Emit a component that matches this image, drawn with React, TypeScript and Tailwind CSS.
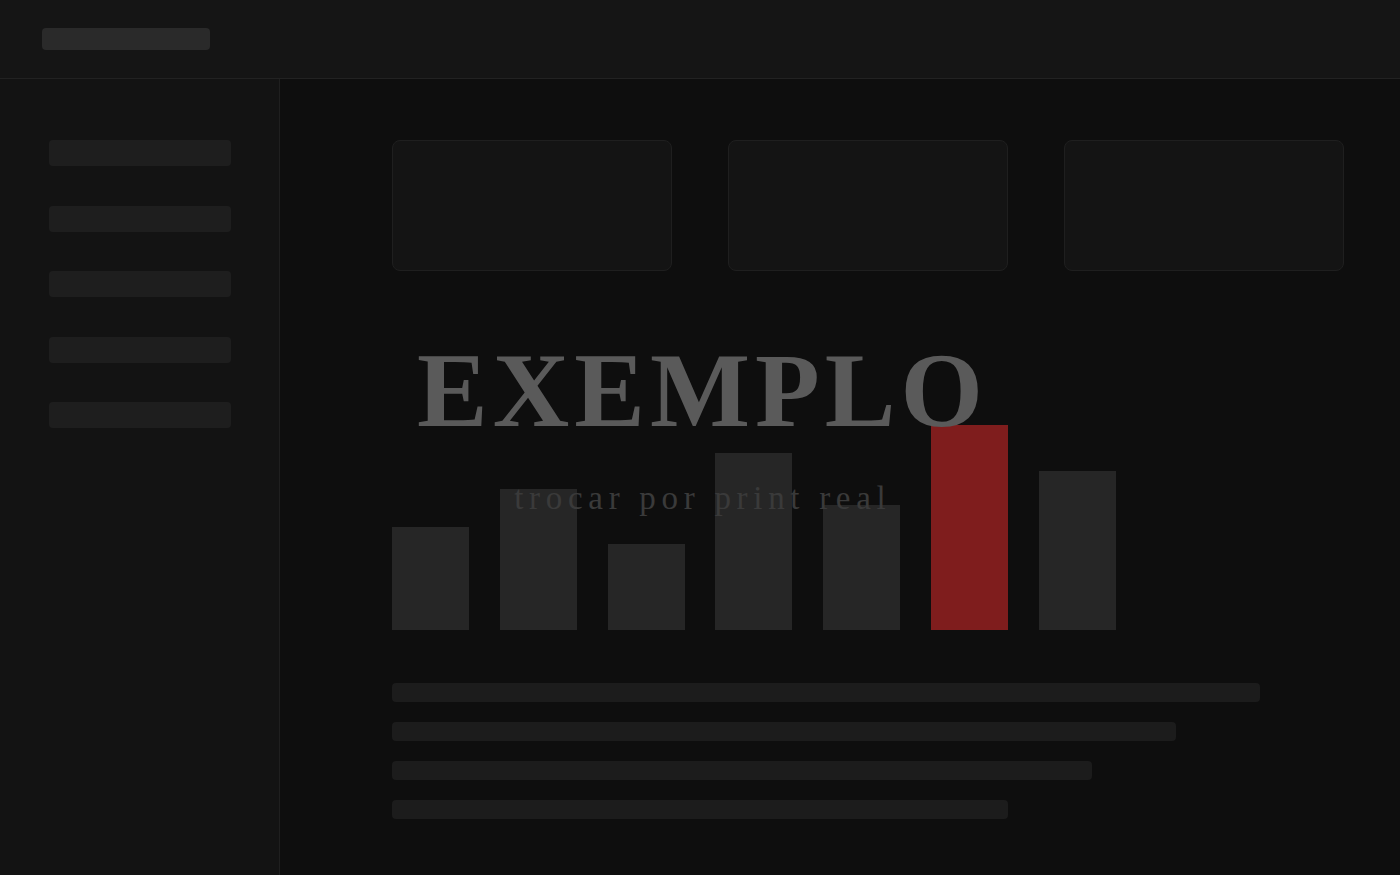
const sideItems = [0, 1, 2, 3, 4];
const bars = [
  { h: 103, hot: false },
  { h: 141, hot: false },
  { h: 86, hot: false },
  { h: 177, hot: false },
  { h: 125, hot: false },
  { h: 205, hot: true },
  { h: 159, hot: false },
];
const lines = ['w-[868px]', 'w-[784px]', 'w-[700px]', 'w-[616px]'];

export default function App() {
  return (
    <div className="relative h-[875px] w-[1400px] overflow-hidden bg-[#0e0e0e] flex flex-col">
      {/* Top bar */}
      <header className="h-[79px] shrink-0 bg-[#151515] border-b border-[#222222] flex items-start pt-[28px] pl-[42px]">
        <div className="h-[22px] w-[168px] rounded bg-[#2a2a2a]" />
      </header>

      <div className="flex flex-1 min-h-0">
        {/* Sidebar */}
        <aside className="w-[280px] shrink-0 bg-[#131313] border-r border-[#1f1f1f] pt-[61px] pl-[49px] flex flex-col gap-[39.5px]">
          {sideItems.map((i) => (
            <div key={i} className="h-[26px] w-[182px] rounded bg-[#1e1e1e]" />
          ))}
        </aside>

        {/* Main */}
        <main className="flex-1 pt-[61px] pl-[112px] pr-[56px]">
          <div className="flex gap-[56px]">
            {[0, 1, 2].map((i) => (
              <div key={i} className="h-[131px] w-[280px] rounded-lg border border-[#1f1f1f] bg-[#141414]" />
            ))}
          </div>

          <div className="mt-[154px] flex items-end gap-[30.8px] h-[205px]">
            {bars.map((b, i) => (
              <div
                key={i}
                className={b.hot ? 'w-[77px] bg-[#7f1d1d]' : 'w-[77px] bg-[#262626]'}
                style={{ height: b.h }}
              />
            ))}
          </div>

          <div className="mt-[53px] flex flex-col gap-[20px]">
            {lines.map((w) => (
              <div key={w} className={`h-[19px] ${w} rounded bg-[#1c1c1c]`} />
            ))}
          </div>
        </main>
      </div>

      {/* Placeholder watermark */}
      <div className="pointer-events-none absolute inset-0 flex flex-col items-center pt-[338px] font-['Liberation_Serif',serif]">
        <div className="text-[106px] font-bold leading-none tracking-[5px] pl-[5px] text-[#5a5a5a]">
          EXEMPLO
        </div>
        <div className="mt-[38px] text-[33px] leading-none tracking-[5.7px] pl-[5.7px] text-[#3a3a3a]">
          trocar por print real
        </div>
      </div>
    </div>
  );
}
